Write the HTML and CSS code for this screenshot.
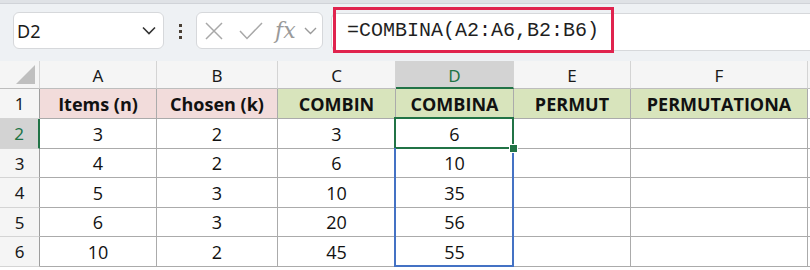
FILE: index.html
```html
<!DOCTYPE html>
<html lang="en">
<head>
    <meta charset="UTF-8">
    <meta name="viewport" content="width=device-width, initial-scale=1.0">
    <title>COMBINA - Sheet1</title>
    <link rel="stylesheet" href="styles.css">
</head>
<body>
    <div class="top-strip"></div>

    <div class="formula-bar">
        <div class="name-box">
            <span>D2</span>
            <svg class="chev" width="14" height="9" viewBox="0 0 14 9"><path d="M1 1.5 L7 7.5 L13 1.5" fill="none" stroke="#333" stroke-width="1.6"/></svg>
        </div>
        <div class="grip"><i></i><i></i><i></i></div>
        <div class="fn-box">
            <svg width="18" height="18" viewBox="0 0 18 18"><path d="M1 1 L17 17 M17 1 L1 17" stroke="#a8a8a8" stroke-width="1.5" fill="none"/></svg>
            <svg width="24" height="18" viewBox="0 0 24 18"><path d="M1 9 L8 16.5 L23 1" stroke="#a8a8a8" stroke-width="1.5" fill="none"/></svg>
            <span class="fx">fx</span>
            <svg width="13" height="8" viewBox="0 0 13 8"><path d="M1 1 L6.5 6.5 L12 1" fill="none" stroke="#9a9a9a" stroke-width="1.4"/></svg>
        </div>
        <div class="formula-input">
            <div class="formula-text">=COMBINA(A2:A6,B2:B6)</div>
        </div>
    </div>

    <div class="sheet">
        <!-- column headers -->
        <div class="hd corner"><span class="tri"></span></div>
        <div class="hd col">A</div>
        <div class="hd col">B</div>
        <div class="hd col">C</div>
        <div class="hd col active-col">D</div>
        <div class="hd col">E</div>
        <div class="hd col">F</div>
        <div class="hd col edge"></div>

        <!-- row 1 -->
        <div class="hd row">1</div>
        <div class="cell title pink">Items (n)</div>
        <div class="cell title pink">Chosen (k)</div>
        <div class="cell title green">COMBIN</div>
        <div class="cell title green">COMBINA</div>
        <div class="cell title green">PERMUT</div>
        <div class="cell title green">PERMUTATIONA</div>
        <div class="cell edge"></div>

        <!-- row 2 -->
        <div class="hd row active-row">2</div>
        <div class="cell">3</div>
        <div class="cell">2</div>
        <div class="cell">3</div>
        <div class="cell selected">6<span class="handle"></span></div>
        <div class="cell"></div>
        <div class="cell"></div>
        <div class="cell edge"></div>

        <!-- row 3 -->
        <div class="hd row">3</div>
        <div class="cell">4</div>
        <div class="cell">2</div>
        <div class="cell">6</div>
        <div class="cell range">10</div>
        <div class="cell"></div>
        <div class="cell"></div>
        <div class="cell edge"></div>

        <!-- row 4 -->
        <div class="hd row">4</div>
        <div class="cell">5</div>
        <div class="cell">3</div>
        <div class="cell">10</div>
        <div class="cell range">35</div>
        <div class="cell"></div>
        <div class="cell"></div>
        <div class="cell edge"></div>

        <!-- row 5 -->
        <div class="hd row">5</div>
        <div class="cell">6</div>
        <div class="cell">3</div>
        <div class="cell">20</div>
        <div class="cell range">56</div>
        <div class="cell"></div>
        <div class="cell"></div>
        <div class="cell edge"></div>

        <!-- row 6 -->
        <div class="hd row">6</div>
        <div class="cell">10</div>
        <div class="cell">2</div>
        <div class="cell">45</div>
        <div class="cell range last">55</div>
        <div class="cell"></div>
        <div class="cell"></div>
        <div class="cell edge"></div>
    </div>
</body>
</html>
```

FILE: styles.css
```css
:root {
    --bar-bg: #eef1f4;
    --head-bg: #f5f5f5;
    --grid: #ababab;
    --excel-green: #217346;
    --range-blue: #4472c4;
}

body {
    margin: 0;
    background: #fff;
    font-family: 'Noto Sans', 'Open Sans', sans-serif;
    color: #222;
}

.top-strip {
    height: 4px;
    background: #dfe2e6;
    border-bottom: 1px solid #d0d3d8;
    box-sizing: border-box;
}

/* formula bar */

.formula-bar {
    height: 57px;
    background: var(--bar-bg);
    display: flex;
    align-items: flex-start;
    padding-top: 8px;
    padding-left: 13px;
    box-sizing: border-box;
}

.name-box {
    width: 151px;
    height: 37px;
    box-sizing: border-box;
    background: #fff;
    border: 1px solid #d6d8db;
    border-radius: 6px;
    display: flex;
    align-items: center;
    justify-content: space-between;
    padding: 0 7px 0 3px;
    font-size: 18px;
    color: #1a1a1a;
}

.grip {
    width: 32px;
    display: flex;
    flex-direction: column;
    align-items: center;
    gap: 3px;
    padding-top: 12px;
}

.grip i {
    width: 3px;
    height: 3px;
    background: #4a4035;
}

.fn-box {
    width: 127px;
    height: 37px;
    box-sizing: border-box;
    background: #fff;
    border: 1px solid #d6d8db;
    border-radius: 6px;
    display: flex;
    align-items: center;
    padding-left: 8px;
    gap: 16px;
}

.fn-box .fx {
    font-family: 'DejaVu Serif', 'Liberation Serif', serif;
    font-style: italic;
    font-size: 22px;
    color: #9a9a9a;
    margin-left: -4px;
    margin-right: -8px;
}

.formula-input {
    flex: 1;
    margin-left: 8px;
    margin-top: 1px;
    height: 36px;
    background: #fff;
    border: 1px solid #d6d8db;
    border-right: none;
    border-radius: 6px 0 0 6px;
    position: relative;
}

.formula-text {
    position: absolute;
    left: 1px;
    top: -7px;
    width: 281px;
    height: 46px;
    box-sizing: border-box;
    border: 3px solid #e0234e;
    padding-left: 11px;
    display: flex;
    align-items: center;
    font-family: 'Liberation Mono', 'DejaVu Sans Mono', monospace;
    font-size: 20px;
    color: #1f1f1f;
}

/* sheet grid */

.sheet {
    display: grid;
    grid-template-columns: 40px 117px 121px 118px 118px 117px 177px 2px;
    grid-template-rows: 28px 30px 30px 29px 30px 29px 30px;
}

.hd {
    background: var(--head-bg);
    display: flex;
    align-items: center;
    justify-content: center;
    font-size: 17px;
    color: #1a1a1a;
    box-sizing: border-box;
}

.hd.col {
    border-right: 1px solid #d4d4d4;
    border-bottom: 1px solid #bdbdbd;
    padding-top: 2px;
}

.hd.row {
    border-right: 1px solid #9e9e9e;
    border-bottom: 1px solid #d4d4d4;
}

.corner {
    border-right: 1px solid #d4d4d4;
    border-bottom: 1px solid #bdbdbd;
    align-items: flex-end;
    justify-content: flex-end;
    padding: 0 4px 4px 0;
}

.tri {
    width: 0;
    height: 0;
    border-left: 19px solid transparent;
    border-bottom: 19px solid #bfbfbf;
}

.hd.edge {
    border-right: none;
}

.active-col {
    background: #d3d3d3;
    color: var(--excel-green);
    border-bottom: 2px solid var(--excel-green) !important;
}

.active-row {
    background: #d3d3d3;
    color: var(--excel-green);
    border-right: 2px solid var(--excel-green) !important;
}

.cell {
    border-right: 1px solid var(--grid);
    border-bottom: 1px solid var(--grid);
    box-sizing: border-box;
    display: flex;
    align-items: center;
    justify-content: center;
    font-family: 'Open Sans', sans-serif;
    font-size: 18px;
    color: #111;
    position: relative;
}

.cell.edge {
    border-right: none;
}

.title {
    font-weight: 700;
    font-size: 18px;
}

.pink {
    background: #f2dcdb;
}

.green {
    background: #d8e4bc;
}

/* selection */

.selected::after {
    content: '';
    position: absolute;
    left: -2px;
    top: -2px;
    right: -1px;
    bottom: -1px;
    border: 2px solid var(--excel-green);
}

.handle {
    position: absolute;
    right: -5px;
    bottom: -5px;
    width: 7px;
    height: 7px;
    background: var(--excel-green);
    border: 1px solid #fff;
    z-index: 2;
}

.range::after {
    content: '';
    position: absolute;
    left: -2px;
    top: -1px;
    right: -1px;
    bottom: -1px;
    border-left: 2px solid var(--range-blue);
    border-right: 2px solid var(--range-blue);
}

.range.last::after {
    border-bottom: 2px solid var(--range-blue);
}
```
